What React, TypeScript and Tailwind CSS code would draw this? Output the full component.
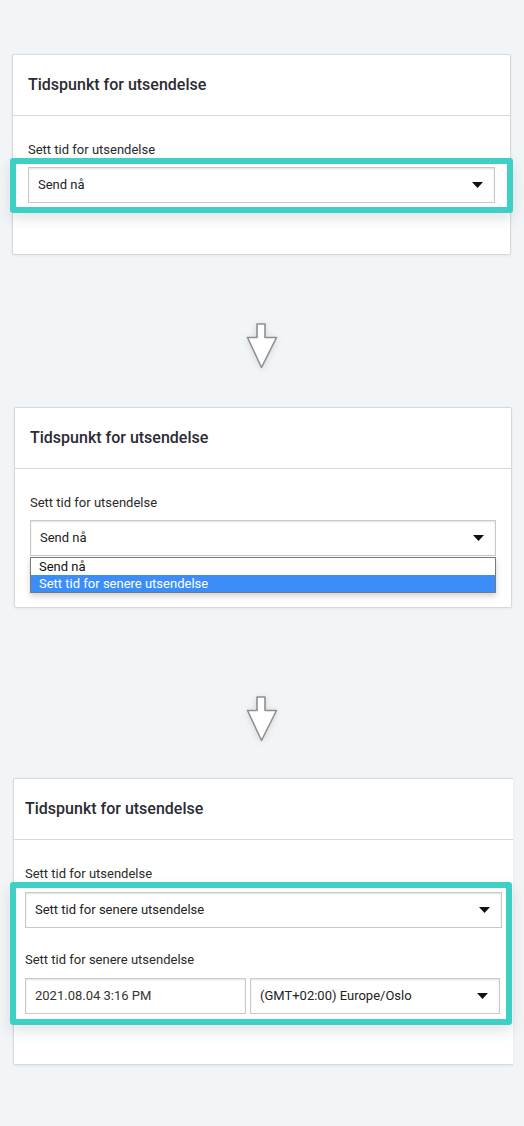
import React from "react";

const font = { fontFamily: "Roboto, 'Noto Sans', sans-serif" };

function Caret() {
  return (
    <svg width="11" height="6" viewBox="0 0 11 6" className="shrink-0">
      <path d="M0 0 H11 L5.5 6 Z" fill="#111" />
    </svg>
  );
}

function SelectBox({ value, className = "" }: { value: string; className?: string }) {
  return (
    <div
      className={`flex h-[36px] items-center justify-between border border-[#c9c9c9] bg-white pl-[9px] pr-[11px] text-[13px] text-[#222] shadow-[inset_0_1px_2px_rgba(0,0,0,0.12)] ${className}`}
    >
      <span>{value}</span>
      <Caret />
    </div>
  );
}

function DownArrow({ className = "" }: { className?: string }) {
  return (
    <div className={`flex justify-center ${className}`}>
      <svg width="32" height="46" viewBox="0 0 32 46" className="drop-shadow-[0_1px_3px_rgba(0,0,0,0.12)]">
        <path d="M11 1 H19 V14.5 H30.5 L15.5 44.5 L1.5 14.5 H11 Z" fill="#fff" stroke="#8f8f8f" strokeWidth="1.6" strokeLinejoin="round" />
      </svg>
    </div>
  );
}

function CardHeader({ px }: { px: string }) {
  return (
    <div className={`flex h-[61px] items-center border-b border-[#d4d7da] ${px}`}>
      <h2 className="text-[16px] font-medium text-[#2b2b33]">Tidspunkt for utsendelse</h2>
    </div>
  );
}

function Label({ children, className = "" }: { children: React.ReactNode; className?: string }) {
  return <div className={`text-[13px] leading-[16px] text-[#2a2a2a] ${className}`}>{children}</div>;
}

export default function App() {
  return (
    <div className="min-h-[1126px] w-[524px] bg-[#f2f5f8] pt-[54px]" style={font}>
      {/* Steg 1: standard */}
      <div className="ml-[12px] w-[499px] rounded-[2px] border border-[#d6d9dc] bg-white shadow-[0_1px_3px_rgba(0,0,0,0.06)]">
        <CardHeader px="px-[15px]" />
        <div className="px-[15px] pt-[26px] pb-[51px]">
          <Label className="mb-[9px]">Sett tid for utsendelse</Label>
          <div className="relative">
            <div className="pointer-events-none absolute -top-[9px] -bottom-[10px] -left-[18px] -right-[18px] rounded-[3px] border-[6px] border-[#3ed0c4] shadow-[0_6px_14px_rgba(0,40,40,0.12)]" />
            <SelectBox value="Send nå" />
          </div>
        </div>
      </div>

      <DownArrow className="mt-[68px] mb-[38px]" />

      {/* Steg 2: åpen liste */}
      <div className="ml-[14px] w-[498px] rounded-[2px] border border-[#d6d9dc] bg-white shadow-[0_1px_3px_rgba(0,0,0,0.06)]">
        <CardHeader px="px-[15px]" />
        <div className="px-[15px] pt-[26px] pb-[14px]">
          <Label className="mb-[9px]">Sett tid for utsendelse</Label>
          <SelectBox value="Send nå" />
          <div className="mt-[1px] border border-[#7a7a7a] bg-white text-[13px] leading-[17px] shadow-[0_3px_6px_rgba(0,0,0,0.18)]">
            <div className="pl-[8px] text-[#111]">Send nå</div>
            <div className="bg-[#3b8ef8] pl-[8px] text-white">Sett tid for senere utsendelse</div>
          </div>
        </div>
      </div>

      <DownArrow className="mt-[88px] mb-[36px]" />

      {/* Steg 3: senere utsendelse */}
      <div className="ml-[13px] w-[500px] rounded-l-[2px] border border-r-0 border-[#d6d9dc] bg-white shadow-[0_1px_3px_rgba(0,0,0,0.06)]">
        <CardHeader px="px-[11px]" />
        <div className="px-[11px] pt-[26px] pb-[50px]">
          <Label className="mb-[10px]">Sett tid for utsendelse</Label>
          <div className="relative">
            <div className="pointer-events-none absolute -top-[10px] -bottom-[11px] -left-[15px] -right-[10px] rounded-[3px] border-[6px] border-[#3ed0c4] shadow-[0_6px_14px_rgba(0,40,40,0.12)]" />
            <SelectBox value="Sett tid for senere utsendelse" />
            <Label className="mt-[24px] mb-[10px]">Sett tid for senere utsendelse</Label>
            <div className="flex gap-[4px] pr-[2px]">
              <div className="flex h-[36px] w-[221px] items-center border border-[#c9c9c9] bg-white pl-[9px] text-[13px] text-[#333] shadow-[inset_0_1px_2px_rgba(0,0,0,0.12)]">
                2021.08.04 3:16 PM
              </div>
              <SelectBox value="(GMT+02:00) Europe/Oslo" className="flex-1" />
            </div>
          </div>
        </div>
      </div>
    </div>
  );
}
